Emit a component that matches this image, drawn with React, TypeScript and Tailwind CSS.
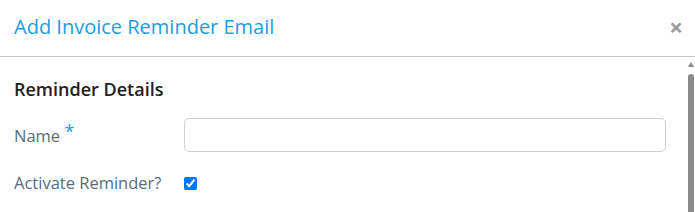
import React from 'react';

export default function App() {
  return (
    <div className="w-[695px] h-[212px] bg-white overflow-hidden font-['Open_Sans',sans-serif]">
      {/* Modal header */}
      <div className="h-[57px] flex items-center justify-between pl-[14px] pr-[12px] pb-[3px] border-b border-[#c4c4c4]">
        <h1 className="text-[20px] text-[#1a9ee2] leading-none">Add Invoice Reminder Email</h1>
        <span className="text-[24px] font-bold text-[#9a9a9a] leading-none">×</span>
      </div>

      {/* Modal body */}
      <div className="flex h-[155px]">
        <div className="flex-1 pl-[14px] pr-[21px] pt-[19px]">
          <h2 className="text-[18px] font-semibold text-[#222] leading-[26px]">Reminder Details</h2>

          <div className="flex items-center mt-[16px]">
            <label className="w-[170px] text-[16.5px] text-[#5b6b79]">
              Name <span className="text-[#1a9ee2] text-[18px] relative -top-[4px]">*</span>
            </label>
            <input
              type="text"
              className="flex-1 h-[34px] border border-[#cfcfcf] rounded-[5px] px-2 text-[14px] outline-none"
            />
          </div>

          <div className="flex items-center mt-[19px]">
            <label className="w-[170px] text-[16.5px] text-[#5b6b79]">Activate Reminder?</label>
            <input type="checkbox" defaultChecked className="w-[13px] h-[13px] m-0" />
          </div>
        </div>

        {/* Scrollbar */}
        <div className="w-[7px] flex flex-col items-center mr-[1px] pt-[5px]">
          <div className="w-0 h-0 border-l-[3px] border-r-[3px] border-b-[5px] border-l-transparent border-r-transparent border-b-[#8a8a8a]" />
          <div className="w-[6px] flex-1 mt-[7px] bg-[#8a8a8a] rounded-t-[3px]" />
        </div>
      </div>
    </div>
  );
}
